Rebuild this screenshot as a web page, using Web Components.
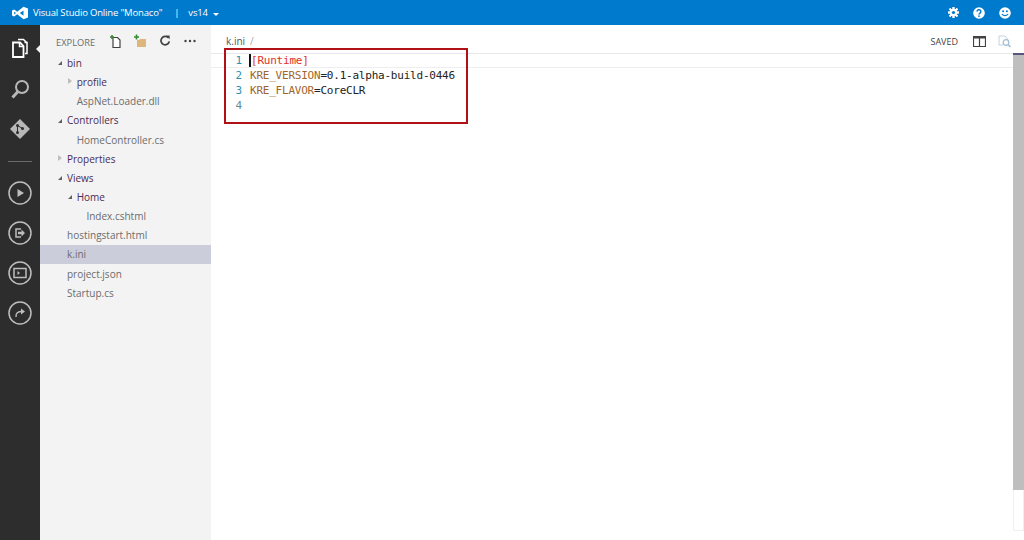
<!DOCTYPE html>
<html><head><meta charset="utf-8"><style>
html,body{margin:0;padding:0;width:1024px;height:540px;overflow:hidden;background:#fff}
body{font-family:"Open Sans",Roboto,"Liberation Sans",sans-serif}
</style></head><body>
<ide-app></ide-app>
<script>
function def(name,html){customElements.define(name,class extends HTMLElement{constructor(){super();this.attachShadow({mode:'open'}).innerHTML=html}})}
const ic=(s,w=20,h=20,vb)=>`<svg width="${w}" height="${h}" viewBox="${vb||`0 0 ${w} ${h}`}">${s}</svg>`;
const gear=(()=>{let t='';for(let a=0;a<8;a++)t+=`<rect x="5.800" y="0" width="2.400" height="14" fill="#fff" transform="rotate(${a*45} 7 7)"/>`;return t})();
def('top-bar',`<style>:host{display:flex;align-items:center;height:25px;background:#007acc;color:#fff;font:9.500px "Open Sans",sans-serif;letter-spacing:-.17px;padding:0 13px 0 12px;box-sizing:border-box}
.t{margin-left:5px}.sep{margin:0 9px 0 12px}.r{margin-left:auto;display:flex;gap:14px;align-items:center}svg{display:block}.c{margin-left:5px;border:3.500px solid transparent;border-top-color:#fff;margin-top:4px;border-bottom:0}</style>
<svg width="16" height="14" viewBox="0 0 16 16" preserveAspectRatio="none"><path d="M11.500 .8 16 2.800v10.400l-4.500 2L5.200 9.500 2.200 12 0 10.800V5.200L2.200 4l3 2.500zM11.500 5 7.800 8l3.700 3zM2.200 6.200v3.600L4 8z" fill="#fff"/></svg>
<span class="t">Visual Studio Online "Monaco"</span><span class="sep">|</span><span>vs14</span><span class="c"></span>
<span class="r">
${ic(gear+'<circle cx="7" cy="7" r="4.800" fill="#fff"/><circle cx="7" cy="7" r="2" fill="#007acc"/>',11,11,'0 0 14 14')}
${ic('<circle cx="7" cy="7" r="6.800" fill="#fff"/><path d="M4.800 5.400a2.200 2.200 0 1 1 3.400 1.800c-.8.5-1.200.9-1.200 1.600" fill="none" stroke="#007acc" stroke-width="1.700"/><rect x="6.100" y="9.800" width="1.800" height="1.800" fill="#007acc"/>',12,12,'0 0 14 14')}
${ic('<circle cx="7" cy="7" r="6.800" fill="#fff"/><circle cx="4.800" cy="5" r="1.200" fill="#007acc"/><circle cx="9.200" cy="5" r="1.200" fill="#007acc"/><path d="M3.300 8.300q3.700 3.700 7.400 0" fill="none" stroke="#007acc" stroke-width="1.400"/>',12,12,'0 0 14 14')}
</span>`);
const circ=s=>ic(`<circle cx="12" cy="12" r="11" fill="none" stroke="#bdbdbd" stroke-width="1.500"/>${s}`,24,24);
def('activity-bar',`<style>:host{display:flex;flex-direction:column;align-items:center;width:40px;background:#2d2d2d;flex:none;position:relative}
svg{display:block}.sep{width:24px;height:1px;background:#6b6b6b;margin:22px 0 19px}.nib{position:absolute;right:0;top:20px;border:4px solid transparent;border-right-color:#f3f3f3;border-left:0}
.a{margin-top:13px}.b{margin-top:19px}.g{margin-top:20px}.c{margin-bottom:16px}</style><span class="nib"></span>
<div class="a">${ic('<path d="M14.500 5.500h2.500V16.500h-2" fill="none" stroke="#fff" stroke-width="1.500" transform="translate(1 -1)"/><path d="M9 2h5.500l3.500 3.500" fill="none" stroke="#fff" stroke-width="1.500" transform="translate(0 -.5)"/><path d="M4 4.500h7l3.500 3.500v11H4z" fill="#2d2d2d" stroke="#fff" stroke-width="1.800"/><path d="M10.500 4.500v4h4" fill="none" stroke="#fff" stroke-width="1.500"/>',22,22)}</div>
<div class="b">${ic('<circle cx="12" cy="8" r="6" fill="none" stroke="#b8b8b8" stroke-width="2"/><path d="M8 12.500 2.500 18.500" stroke="#b8b8b8" stroke-width="3"/>',20,20)}</div>
<div class="g">${ic('<path d="M10 0 20 10 10 20 0 10z" fill="#b8b8b8"/><circle cx="7.500" cy="6.500" r="1.500" fill="#2d2d2d"/><circle cx="7.500" cy="13.500" r="1.500" fill="#2d2d2d"/><circle cx="12.500" cy="9.500" r="1.500" fill="#2d2d2d"/><path d="M7.500 6.500v7M7.500 6.500l5 3" stroke="#2d2d2d" stroke-width="1"/>',20,20)}</div>
<div class="sep"></div>
<div class="c">${circ('<path d="M9.500 8v8l6.500-4z" fill="#bdbdbd"/>')}</div>
<div class="c">${circ('<path d="M13 8H8v8h5" fill="none" stroke="#bdbdbd" stroke-width="1.500"/><path d="M10 10.700h3.500V8.500l3.500 3.500-3.500 3.500v-2.200H10z" fill="#bdbdbd"/>')}</div>
<div class="c">${circ('<rect x="6" y="7.500" width="12" height="9" fill="none" stroke="#bdbdbd" stroke-width="1.500"/><path d="M9.500 10v4l2.500-2z" fill="#bdbdbd"/>')}</div>
<div>${circ('<path d="M8 16c-.5-4 2-5.500 6-5.500" fill="none" stroke="#bdbdbd" stroke-width="1.500"/><path d="M13 7.500 17 10.500 13 13.500z" fill="#bdbdbd"/>')}</div>`);
def('tree-row',`<style>:host{display:flex;align-items:center;height:19.170px;font-size:10px;color:#6c6c6c;padding-left:calc(27px + var(--d,0)*9.700px);position:relative}
:host([dir-row]){color:#4b2b52}:host([sel]){background:#cbcddb}
.tw{position:absolute;left:calc(18px + var(--d,0)*9.700px);top:6px;width:0;height:0}
:host([open]) .tw{border-left:4px solid transparent;border-bottom:4px solid #5f5f5f;top:8px}
:host([shut]) .tw{border:3.500px solid transparent;border-left:4px solid #bdbdbd;border-right:0}</style><span class="tw"></span><slot></slot>`);
def('side-bar',`<style>:host{display:block;width:171px;background:#f3f3f3;flex:none;padding-top:6px;box-sizing:border-box}
.h{display:flex;align-items:center;height:21px;font-size:9.300px;color:#6c6c6c;padding-left:16px;margin-bottom:1.300px;position:relative}
.l{position:relative;top:1px}
.i{display:flex;align-items:center;margin-left:13px;gap:11px;position:relative;top:-1px}svg{display:block}</style>
<div class="h"><span class="l">EXPLORE</span><span class="i">
${ic('<path d="M5 3.500h4.500L12 6v7.500H5z" fill="#fff" stroke="#424242" stroke-width="1.200"/><path d="M2 3h4M4 1v4" stroke="#388a34" stroke-width="1.600"/>',14,14)}
${ic('<path d="M4 6h2l1-1h6v8H4z" fill="#dcb67a"/><path d="M1 3h5M3.500 .5v5" stroke="#388a34" stroke-width="1.600"/>',14,14)}
${ic('<path d="M10.300 3.800a4.200 4.200 0 1 0 1 3.600" fill="none" stroke="#424242" stroke-width="1.700"/><path d="M7.800 1.500h3.800v3.800z" fill="#424242"/>',14,14)}
${ic('<g fill="#424242"><circle cx="2.500" cy="7" r="1.200"/><circle cx="7" cy="7" r="1.200"/><circle cx="11.500" cy="7" r="1.200"/></g>',14,14)}
</span></div><slot></slot>`);
def('editor-pane',`<style>:host{display:flex;flex-direction:column;flex:1;min-width:0;position:relative;background:#fff}
.crumb{display:flex;align-items:center;height:24px;padding:4px 12px 0 15px;border-bottom:1px solid #e8e8e8;font-size:10px;color:#555}
.sl{color:#aaa;margin-left:5px}.r{margin-left:auto;display:flex;align-items:center;gap:15px;color:#444;font-size:9px}
.r svg:last-child{margin-left:-3px}
svg{display:block}
.code{display:grid;grid-template-columns:22px 1fr;grid-auto-rows:15px;padding-left:17px;font:11px/15px "DejaVu Sans Mono","Liberation Mono",monospace;letter-spacing:-.22px;color:#222;position:relative;white-space:pre;margin-top:-1px}
.n{color:#2b91af;text-align:right;padding-right:8px;width:22px;box-sizing:border-box}
.red{color:#e0302a}.k{color:#a0662d}.dim{color:#5f8a9c}
.hl{position:absolute;left:0;right:0;top:1px;height:13px;border-bottom:1px solid #eee}
.l{position:relative}
.cur{border-left:2px solid #111;margin-left:-1px}
.box{position:absolute;left:13px;top:23px;width:244px;height:76px;box-sizing:border-box;border:2.500px solid #b01016;pointer-events:none}
.sb{position:absolute;right:0;top:28px;width:11px;height:478px;box-sizing:border-box;border:1px solid #f0f0f0;border-top:0}
.th{position:absolute;left:-1px;right:-1px;top:0;height:437px;background:#bebebe;border-top:2px solid #55557f;box-sizing:border-box}
</style>
<div class="crumb"><span>k.ini</span><span class="sl">/</span><span class="r"><span>SAVED</span>
${ic('<path d="M.5 1.500h12v10H.5zM6.500 1.500v10" fill="none" stroke="#424242" stroke-width="1.200"/><rect x="0" y="1" width="13" height="2.500" fill="#424242"/>',13,13)}
${ic('<path d="M1 2h6l2 2v2M1 2v9h4" fill="none" stroke="#c3d3e0"/><circle cx="8" cy="8.500" r="2.800" fill="none" stroke="#9fbdd4" stroke-width="1.200"/><path d="M10 10.500l2.500 2.500" stroke="#9fbdd4" stroke-width="1.500"/>',14,14)}
</span></div>
<div class="code"><span class="hl"></span><span class="n">1</span><span class="l"><span class="cur red">[Runtime]</span></span>
<span class="n">2</span><span class="l"><span class="k">KRE_VERSION</span>=0.1-alpha-build-0446</span>
<span class="n">3</span><span class="l"><span class="k">KRE_FLAVOR</span>=CoreCLR</span>
<span class="n dim">4</span><span></span></div>
<div class="sb"><div class="th"></div></div>
<div class="box"></div>`);
def('ide-app',`<style>:host{display:flex;flex-direction:column;width:1024px;height:540px}.m{display:flex;flex:1;min-height:0}</style>
<top-bar></top-bar><div class="m"><activity-bar></activity-bar><side-bar>
<tree-row dir-row open style="--d:0">bin</tree-row>
<tree-row dir-row shut style="--d:1">profile</tree-row>
<tree-row style="--d:1">AspNet.Loader.dll</tree-row>
<tree-row dir-row open style="--d:0">Controllers</tree-row>
<tree-row style="--d:1">HomeController.cs</tree-row>
<tree-row dir-row shut style="--d:0">Properties</tree-row>
<tree-row dir-row open style="--d:0">Views</tree-row>
<tree-row dir-row open style="--d:1">Home</tree-row>
<tree-row style="--d:2">Index.cshtml</tree-row>
<tree-row style="--d:0">hostingstart.html</tree-row>
<tree-row sel style="--d:0">k.ini</tree-row>
<tree-row style="--d:0">project.json</tree-row>
<tree-row style="--d:0">Startup.cs</tree-row>
</side-bar><editor-pane></editor-pane></div>`);
</script></body></html>
